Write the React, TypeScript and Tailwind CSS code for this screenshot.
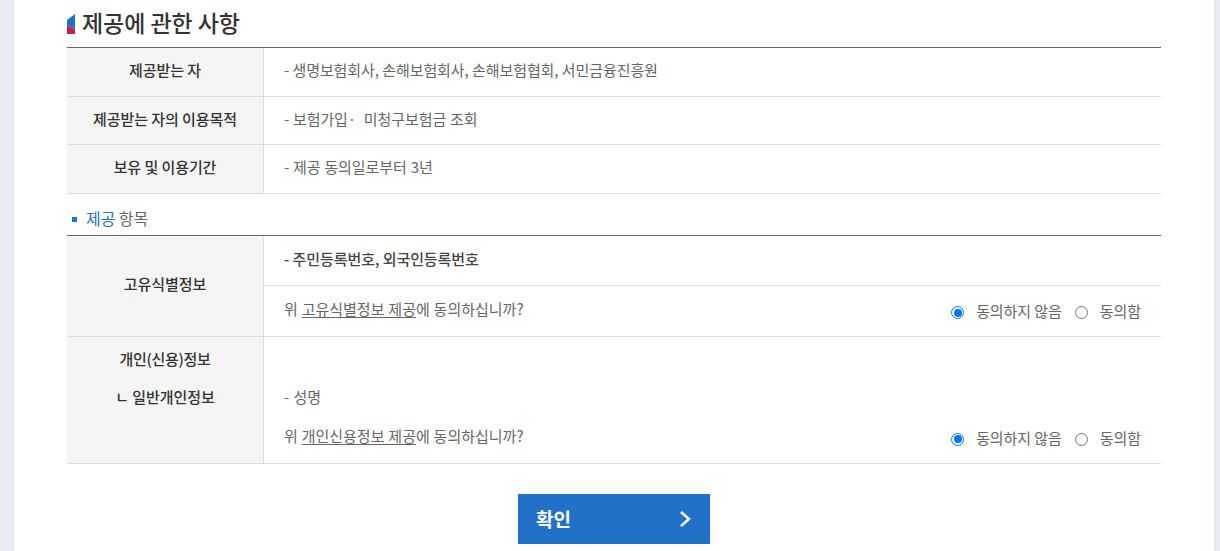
import React from 'react';

const Consent = () => (
  <div className="flex items-center text-[15px] text-[#666] gap-[12px] mt-[2px]">
    <span className="w-[13px] h-[13px] mt-[1px] rounded-full border-[1.5px] border-[#0075ff] flex items-center justify-center">
      <span className="w-[8px] h-[8px] rounded-full bg-[#0075ff]" />
    </span>
    <span className="mr-[1px] -mt-[2px]">동의하지 않음</span>
    <span className="w-[13px] h-[13px] mt-[1px] rounded-full border border-[#767676]" />
    <span className="-mt-[2px]">동의함</span>
  </div>
);

const InfoRow = ({ label, text, height, textClass }: { label: string; text: string; height: string; textClass?: string }) => (
  <div className={`flex border-b border-[#ddd] ${height}`}>
    <div className="w-[197px] shrink-0 bg-[#f5f5f5] border-r border-[#ddd] flex items-center justify-center text-[15px] font-medium text-[#333] pb-[3px]">
      {label}
    </div>
    <div className={`flex-1 pl-[20px] flex items-center text-[15px] text-[#666] pb-[3px] ${textClass ?? ''}`}>{text}</div>
  </div>
);

const App: React.FC = () => {
  return (
    <div className="h-[551px] overflow-hidden bg-[#e8edf5] px-[13px] pr-[5px] font-['Noto_Sans_CJK_KR','Noto_Sans',sans-serif] tracking-[-0.07px]">
      <div className="h-full bg-white border-l border-r border-[#dfe3ea] pl-[53px] pr-[53px]">
        <div className="flex items-center h-[47px] gap-[7px]">
          <svg width="8" height="20" viewBox="0 0 8 20" className="shrink-0">
            <path d="M8 0V15L0 11V6Z" fill="#2271c9" />
            <path d="M0 11L8 15V20H0Z" fill="#b72746" />
          </svg>
          <h2 className="text-[23px] font-medium text-[#333] -mt-[3px]">제공에 관한 사항</h2>
        </div>

        <div className="border-t border-[#666]">
          <InfoRow height="h-[49px]" label="제공받는 자" text="- 생명보험회사, 손해보험회사, 손해보험협회, 서민금융진흥원" />
          <InfoRow height="h-[48px]" label="제공받는 자의 이용목적" text="- 보험가입· &nbsp;미청구보험금 조회" textClass="[word-spacing:0.5px]" />
          <InfoRow height="h-[49px]" label="보유 및 이용기간" text="- 제공 동의일로부터 3년" textClass="[word-spacing:0.6px]" />
        </div>

        <div className="flex items-center h-[41px] pt-[10px] pl-[5px] gap-[9px] text-[16px] text-[#666]">
          <span className="w-[5px] h-[5px] bg-[#2271c9] -mt-[1px]" />
          <span className="-mt-[3px]">
            <span className="text-[#2271c9]">제공</span> 항목
          </span>
        </div>

        <div className="border-t border-[#666]">
          <div className="flex border-b border-[#ddd] h-[101px]">
            <div className="w-[197px] shrink-0 bg-[#f5f5f5] border-r border-[#ddd] flex items-center justify-center text-[15px] font-medium text-[#333] pb-[3px]">
              고유식별정보
            </div>
            <div className="flex-1 flex flex-col">
              <div className="h-[50px] border-b border-[#ddd] pl-[20px] flex items-center text-[15px] font-medium text-[#444] pb-[3px]">
                - 주민등록번호, 외국인등록번호
              </div>
              <div className="flex-1 pl-[20px] pr-[20px] flex items-center justify-between text-[15px] text-[#666]">
                <span className="-mt-[3px] tracking-normal [word-spacing:0.5px]">
                  위 <span className="underline underline-offset-2">고유식별정보 제공</span>에 동의하십니까?
                </span>
                <Consent />
              </div>
            </div>
          </div>

          <div className="flex border-b border-[#ddd] h-[127px]">
            <div className="w-[197px] shrink-0 bg-[#f5f5f5] border-r border-[#ddd] flex flex-col items-center pt-[11px] gap-[15px] text-[15px] font-medium text-[#333]">
              <span className="tracking-[-0.3px]">개인(신용)정보</span>
              <span>ㄴ 일반개인정보</span>
            </div>
            <div className="flex-1 pl-[20px] pr-[20px] pt-[49px] flex flex-col gap-[18px] text-[15px] text-[#666]">
              <span className="[word-spacing:1px]">- 성명</span>
              <div className="flex items-center justify-between">
                <span className="-mt-[3px] tracking-normal [word-spacing:0.5px]">
                  위 <span className="underline underline-offset-2">개인신용정보 제공</span>에 동의하십니까?
                </span>
                <Consent />
              </div>
            </div>
          </div>
        </div>

        <div className="flex justify-center pt-[30px]">
          <button className="w-[192px] h-[50px] bg-[#2271c9] text-white text-[19px] font-bold flex items-center justify-between pl-[18px] pr-[18px]">
            <span className="mt-[1px]">확인</span>
            <svg width="13" height="18" viewBox="0 0 13 18" fill="none" stroke="white" strokeWidth="2.4">
              <path d="M2 2L10 9L2 16" />
            </svg>
          </button>
        </div>
      </div>
    </div>
  );
};

export default App;
